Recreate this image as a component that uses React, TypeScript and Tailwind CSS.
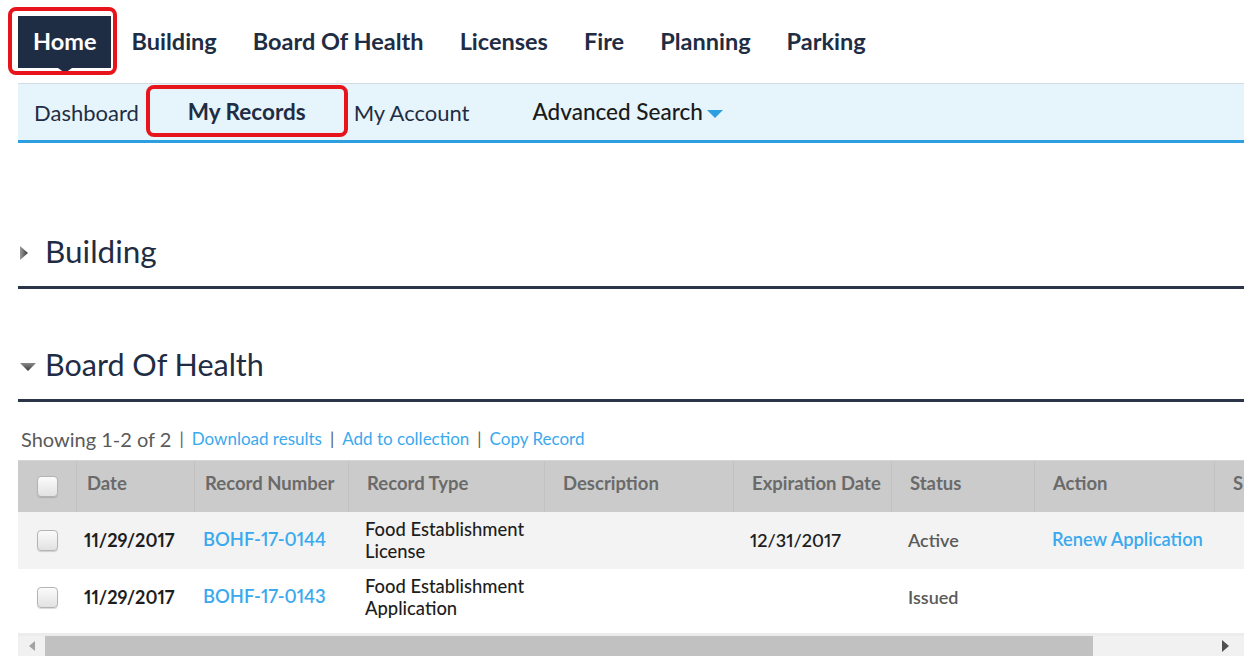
import React from "react";

const NAVY = "text-[#1f2d44]";

function Checkbox() {
  return (
    <div className="h-[21px] w-[21px] rounded-[4px] border border-[#b4b4b4] bg-gradient-to-b from-[#fbfbfb] to-[#e2e2e2] shadow-[0_1px_1px_rgba(0,0,0,0.15)]" />
  );
}

const cols = "grid grid-cols-[58px_118px_154px_196px_189px_158px_143px_180px_200px]";

const headers: { label: string; pl: string }[] = [
  { label: "Date", pl: "pl-[10px]" },
  { label: "Record Number", pl: "pl-[10px]" },
  { label: "Record Type", pl: "pl-[18px]" },
  { label: "Description", pl: "pl-[18px]" },
  { label: "Expiration Date", pl: "pl-[18px]" },
  { label: "Status", pl: "pl-[18px]" },
  { label: "Action", pl: "pl-[18px]" },
  { label: "Short Notes", pl: "pl-[18px]" },
];

const rows = [
  {
    date: "11/29/2017",
    num: "BOHF-17-0144",
    type: ["Food Establishment", "License"],
    exp: "12/31/2017",
    status: "Active",
    action: "Renew Application",
    bg: "bg-[#f3f3f3]",
    h: "h-[57px] pb-[1px]",
  },
  {
    date: "11/29/2017",
    num: "BOHF-17-0143",
    type: ["Food Establishment", "Application"],
    exp: "",
    status: "Issued",
    action: "",
    bg: "bg-white",
    h: "h-[64px] pb-[8px]",
  },
];

export default function App() {
  return (
    <div className="relative h-[656px] w-[1244px] overflow-hidden bg-white font-['Lato','Liberation_Sans',sans-serif] proportional-nums">
      {/* primary navigation */}
      <div className="flex items-start pt-[16px] pl-[18px] h-[83px]">
        <div className="relative flex h-[52px] items-center bg-[#1f2d44] px-[15px]">
          <span className="text-[23.5px] font-bold text-white">Home</span>
          <div className="absolute left-1/2 top-full -translate-x-1/2 h-0 w-0 border-x-[7px] border-t-[5px] border-x-transparent border-t-[#1f2d44]" />
        </div>
        {["Building", "Board Of Health", "Licenses", "Fire", "Planning", "Parking"].map((t, i) => (
          <div
            key={t}
            className={`flex h-[52px] items-center px-[18px] ${i === 0 ? "ml-[2px]" : ""}`}
          >
            <span className={`text-[23.5px] font-bold ${NAVY}`}>{t}</span>
          </div>
        ))}
      </div>
      <div className="pointer-events-none absolute left-[8px] top-[7px] h-[68px] w-[109px] rounded-[8px] border-[4px] border-[#e8141b]" />

      {/* secondary navigation */}
      <div className="relative ml-[18px] flex h-[60px] items-center border-t border-b-[3px] border-t-[#d3dbe1] border-b-[#2d9fe0] bg-[#e6f4fb]">
        <span className={`pl-[16px] text-[22px] ${NAVY}`}>Dashboard</span>
        <span className={`ml-[49px] text-[22.5px] font-bold ${NAVY}`}>My Records</span>
        <span className={`ml-[48px] text-[22px] ${NAVY}`}>My Account</span>
        <span className="ml-[63px] flex items-center">
          <span className="text-[22.5px] font-medium text-[#1a1a1a]">Advanced Search</span>
          <span className="ml-[4px] mt-[3px] h-0 w-0 border-x-[8px] border-t-[8px] border-x-transparent border-t-[#2d9fe0]" />
        </span>
        <div className="pointer-events-none absolute left-[128px] top-[1px] h-[52px] w-[202px] rounded-[8px] border-[4px] border-[#e8141b]" />
      </div>

      {/* Building section (collapsed) */}
      <div className="ml-[18px] mt-[83px] flex h-[63px] items-center border-b-[3px] border-[#2a3548] pb-[8px]">
        <svg width="10" height="16" viewBox="0 0 10 16" className="ml-[1px] mr-[16px] mt-[1px]">
          <defs>
            <linearGradient id="gr1" x1="0" y1="0" x2="1" y2="0">
              <stop offset="0" stopColor="#9a9a9a" />
              <stop offset="1" stopColor="#3a3a3a" />
            </linearGradient>
          </defs>
          <path d="M1 1 L9 8 L1 15 Z" fill="url(#gr1)" />
        </svg>
        <span className={`text-[31.5px] ${NAVY}`}>Building</span>
      </div>

      {/* Board Of Health section (expanded) */}
      <div className="ml-[18px] mt-[50px] flex h-[63px] items-center border-b-[3px] border-[#2a3548] pb-[8px]">
        <svg width="18" height="10" viewBox="0 0 18 10" className="ml-[1px] mr-[8px] mt-[3px]">
          <defs>
            <linearGradient id="gr2" x1="0" y1="0" x2="0" y2="1">
              <stop offset="0" stopColor="#8a8a8a" />
              <stop offset="1" stopColor="#3a3a3a" />
            </linearGradient>
          </defs>
          <path d="M1 1 L17 1 L9 9 Z" fill="url(#gr2)" />
        </svg>
        <span className={`text-[30.5px] ${NAVY}`}>Board Of Health</span>
      </div>

      {/* result actions */}
      <div className="ml-[21px] mt-[26px] flex h-[22px] items-center text-[17px]">
        <span className="text-[20px] tabular-nums text-[#5a5a5a]">Showing 1-2 of 2</span>
        <span className="mx-[8px] text-[#5a5a5a]">|</span>
        <span className="text-[#3aa9ee]">Download results</span>
        <span className="mx-[8px] text-[#5a5a5a]">|</span>
        <span className="text-[#3aa9ee]">Add to collection</span>
        <span className="mx-[8px] text-[#5a5a5a]">|</span>
        <span className="text-[#3aa9ee]">Copy Record</span>
      </div>

      {/* records table */}
      <div className="ml-[18px] mt-[10px]">
        <div className={`${cols} h-[52px] bg-[#cbcbcb] border-t border-[#d6d6d6]`}>
          <div className="flex items-center justify-center">
            <Checkbox />
          </div>
          {headers.map((h) => (
            <div
              key={h.label}
              className={`flex items-center overflow-hidden whitespace-nowrap border-l border-[#c2c2c2] pb-[6px] ${h.pl} text-[18.5px] font-bold text-[#6a6a6a]`}
            >
              {h.label}
            </div>
          ))}
        </div>
        {rows.map((r) => (
          <div key={r.num} className={`${cols} ${r.h} ${r.bg} text-[18px]`}>
            <div className="flex items-center justify-center">
              <Checkbox />
            </div>
            <div className="flex items-center pl-[8px] font-bold text-[#1e1e1e]">{r.date}</div>
            <div className="flex items-center pl-[9px] text-[18.4px] font-semibold text-[#3aa9ee]">{r.num}</div>
            <div className="flex flex-col justify-center pl-[17px] text-[18.4px] leading-[22px] font-medium text-[#1e1e1e]">
              <span>{r.type[0]}</span>
              <span>{r.type[1]}</span>
            </div>
            <div />
            <div className="flex items-center pl-[17px] font-semibold text-[#1e1e1e]">{r.exp}</div>
            <div className="flex items-center pl-[17px] font-semibold text-[#5a5a5a]">{r.status}</div>
            <div className="flex items-center pl-[18px] text-[18.3px] font-semibold text-[#3aa9ee]">{r.action}</div>
            <div />
          </div>
        ))}
        <div className="h-[3px] bg-[#ececec]" />
        {/* horizontal scrollbar */}
        <div className="flex h-[20px] items-center bg-[#f1f1f1]">
          <div className="flex w-[27px] items-center justify-center">
            <span className="h-0 w-0 border-y-[5px] border-r-[6px] border-y-transparent border-r-[#a3a3a3]" />
          </div>
          <div className="h-[20px] w-[1048px] bg-[#c1c1c1]" />
          <div className="flex-1" />
          <div className="mr-[11px] flex w-[16px] items-center justify-center">
            <span className="h-0 w-0 border-y-[6px] border-l-[7px] border-y-transparent border-l-[#505050]" />
          </div>
        </div>
      </div>
    </div>
  );
}
